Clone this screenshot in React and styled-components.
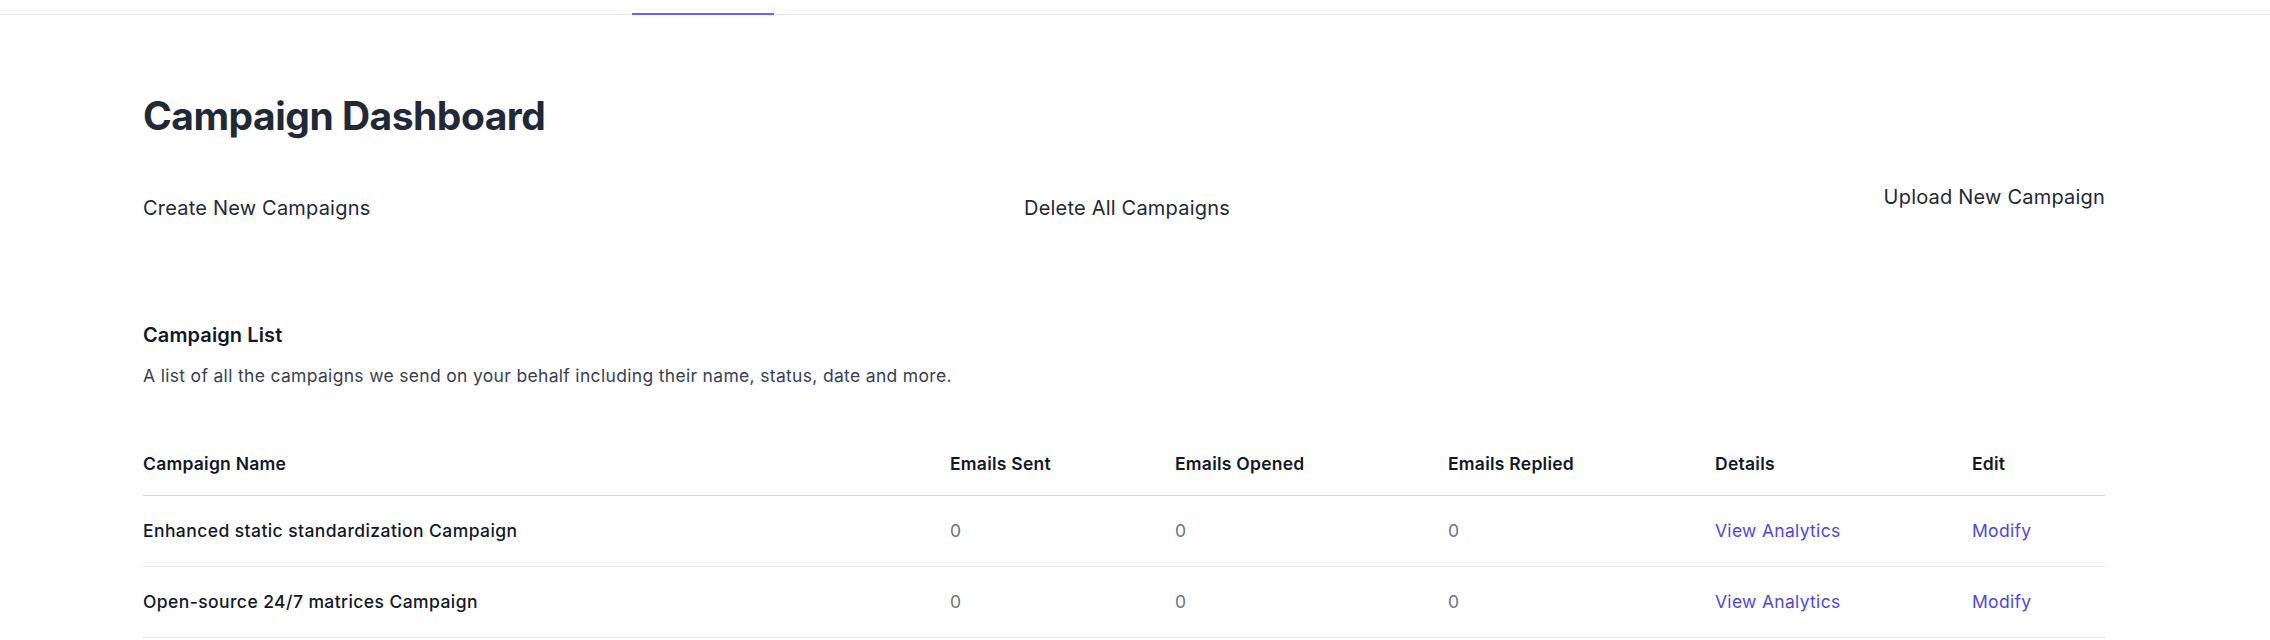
import React from "react";
import styled, { createGlobalStyle } from "styled-components";

const GlobalStyle = createGlobalStyle`
  body {
    margin: 0;
    background: #fff;
    font-family: Inter, "Noto Sans", "Liberation Sans", sans-serif;
    color: #111827;
  }
`;

const TopNav = styled.nav`
  height: 15px;
  border-bottom: 1px solid #e5e7eb;
  box-sizing: border-box;
  display: flex;
  padding-left: 632px;
`;

const NavTab = styled.div`
  width: 142px;
  height: 15px;
  box-sizing: border-box;
  border-bottom: 2px solid ${(p) => (p.$active ? "#6366f1" : "transparent")};
  margin-bottom: -1px;
`;

const Main = styled.main`
  margin-left: 143px;
  width: 1962px;
`;

const Title = styled.h1`
  margin: 77px 0 0;
  font-size: 39px;
  line-height: 48px;
  font-weight: 700;
  color: #1f2937;
  letter-spacing: -0.5px;
`;

const Actions = styled.div`
  display: flex;
  justify-content: space-between;
  align-items: flex-start;
  margin-top: 43px;
`;

const ActionButton = styled.button`
  background: none;
  border: none;
  padding: ${(p) => (p.$raised ? "0" : "11px")} 0 0;
  font-family: inherit;
  font-size: 20px;
  line-height: 28px;
  letter-spacing: 0.2px;
  color: #1f2937;
  cursor: pointer;
`;

const ListHeader = styled.div`
  margin-top: 99px;
`;

const ListTitle = styled.h2`
  margin: 0;
  font-size: 20px;
  line-height: 28px;
  font-weight: 600;
  letter-spacing: 0.1px;
  color: #111827;
`;

const ListText = styled.p`
  margin: 14px 0 0;
  font-size: 17.5px;
  line-height: 25px;
  letter-spacing: 0.32px;
  color: #374151;
`;

const Table = styled.table`
  margin-top: 44.5px;
  width: 100%;
  border-collapse: collapse;
  table-layout: fixed;
`;

const HeadCell = styled.th`
  width: ${(p) => p.$width}px;
  text-align: left;
  padding: 18px 0 19px;
  font-size: 17.5px;
  line-height: 25px;
  font-weight: 600;
  letter-spacing: 0.25px;
  color: #111827;
  border-bottom: 1px solid #d1d5db;
`;

const Row = styled.tr`
  border-bottom: 1px solid #e5e7eb;
`;

const Cell = styled.td`
  padding: 22.5px 0;
  font-size: 17.5px;
  line-height: 25px;
  letter-spacing: ${(p) => (p.$strong ? "0.42px" : "0.3px")};
  font-weight: ${(p) => (p.$strong ? 500 : 400)};
  color: ${(p) => (p.$strong ? "#111827" : "#6b7280")};
  white-space: nowrap;
`;

const Link = styled.a`
  color: #4f46e5;
  text-decoration: none;
  cursor: pointer;
`;

const columns = [
  { label: "Campaign Name", width: 807 },
  { label: "Emails Sent", width: 225 },
  { label: "Emails Opened", width: 273 },
  { label: "Emails Replied", width: 267 },
  { label: "Details", width: 257 },
  { label: "Edit", width: 133 },
];

const campaigns = [
  { name: "Enhanced static standardization Campaign", sent: 0, opened: 0, replied: 0 },
  { name: "Open-source 24/7 matrices Campaign", sent: 0, opened: 0, replied: 0 },
];

export default function App() {
  return (
    <>
      <GlobalStyle />
      <TopNav>
        <NavTab $active />
      </TopNav>
      <Main>
        <Title>Campaign Dashboard</Title>
        <Actions>
          <ActionButton>Create New Campaigns</ActionButton>
          <ActionButton>Delete All Campaigns</ActionButton>
          <ActionButton $raised>Upload New Campaign</ActionButton>
        </Actions>
        <ListHeader>
          <ListTitle>Campaign List</ListTitle>
          <ListText>
            A list of all the campaigns we send on your behalf including their name, status, date and more.
          </ListText>
        </ListHeader>
        <Table>
          <thead>
            <tr>
              {columns.map((c) => (
                <HeadCell key={c.label} $width={c.width}>
                  {c.label}
                </HeadCell>
              ))}
            </tr>
          </thead>
          <tbody>
            {campaigns.map((c) => (
              <Row key={c.name}>
                <Cell $strong>{c.name}</Cell>
                <Cell>{c.sent}</Cell>
                <Cell>{c.opened}</Cell>
                <Cell>{c.replied}</Cell>
                <Cell>
                  <Link>View Analytics</Link>
                </Cell>
                <Cell>
                  <Link>Modify</Link>
                </Cell>
              </Row>
            ))}
          </tbody>
        </Table>
      </Main>
    </>
  );
}
